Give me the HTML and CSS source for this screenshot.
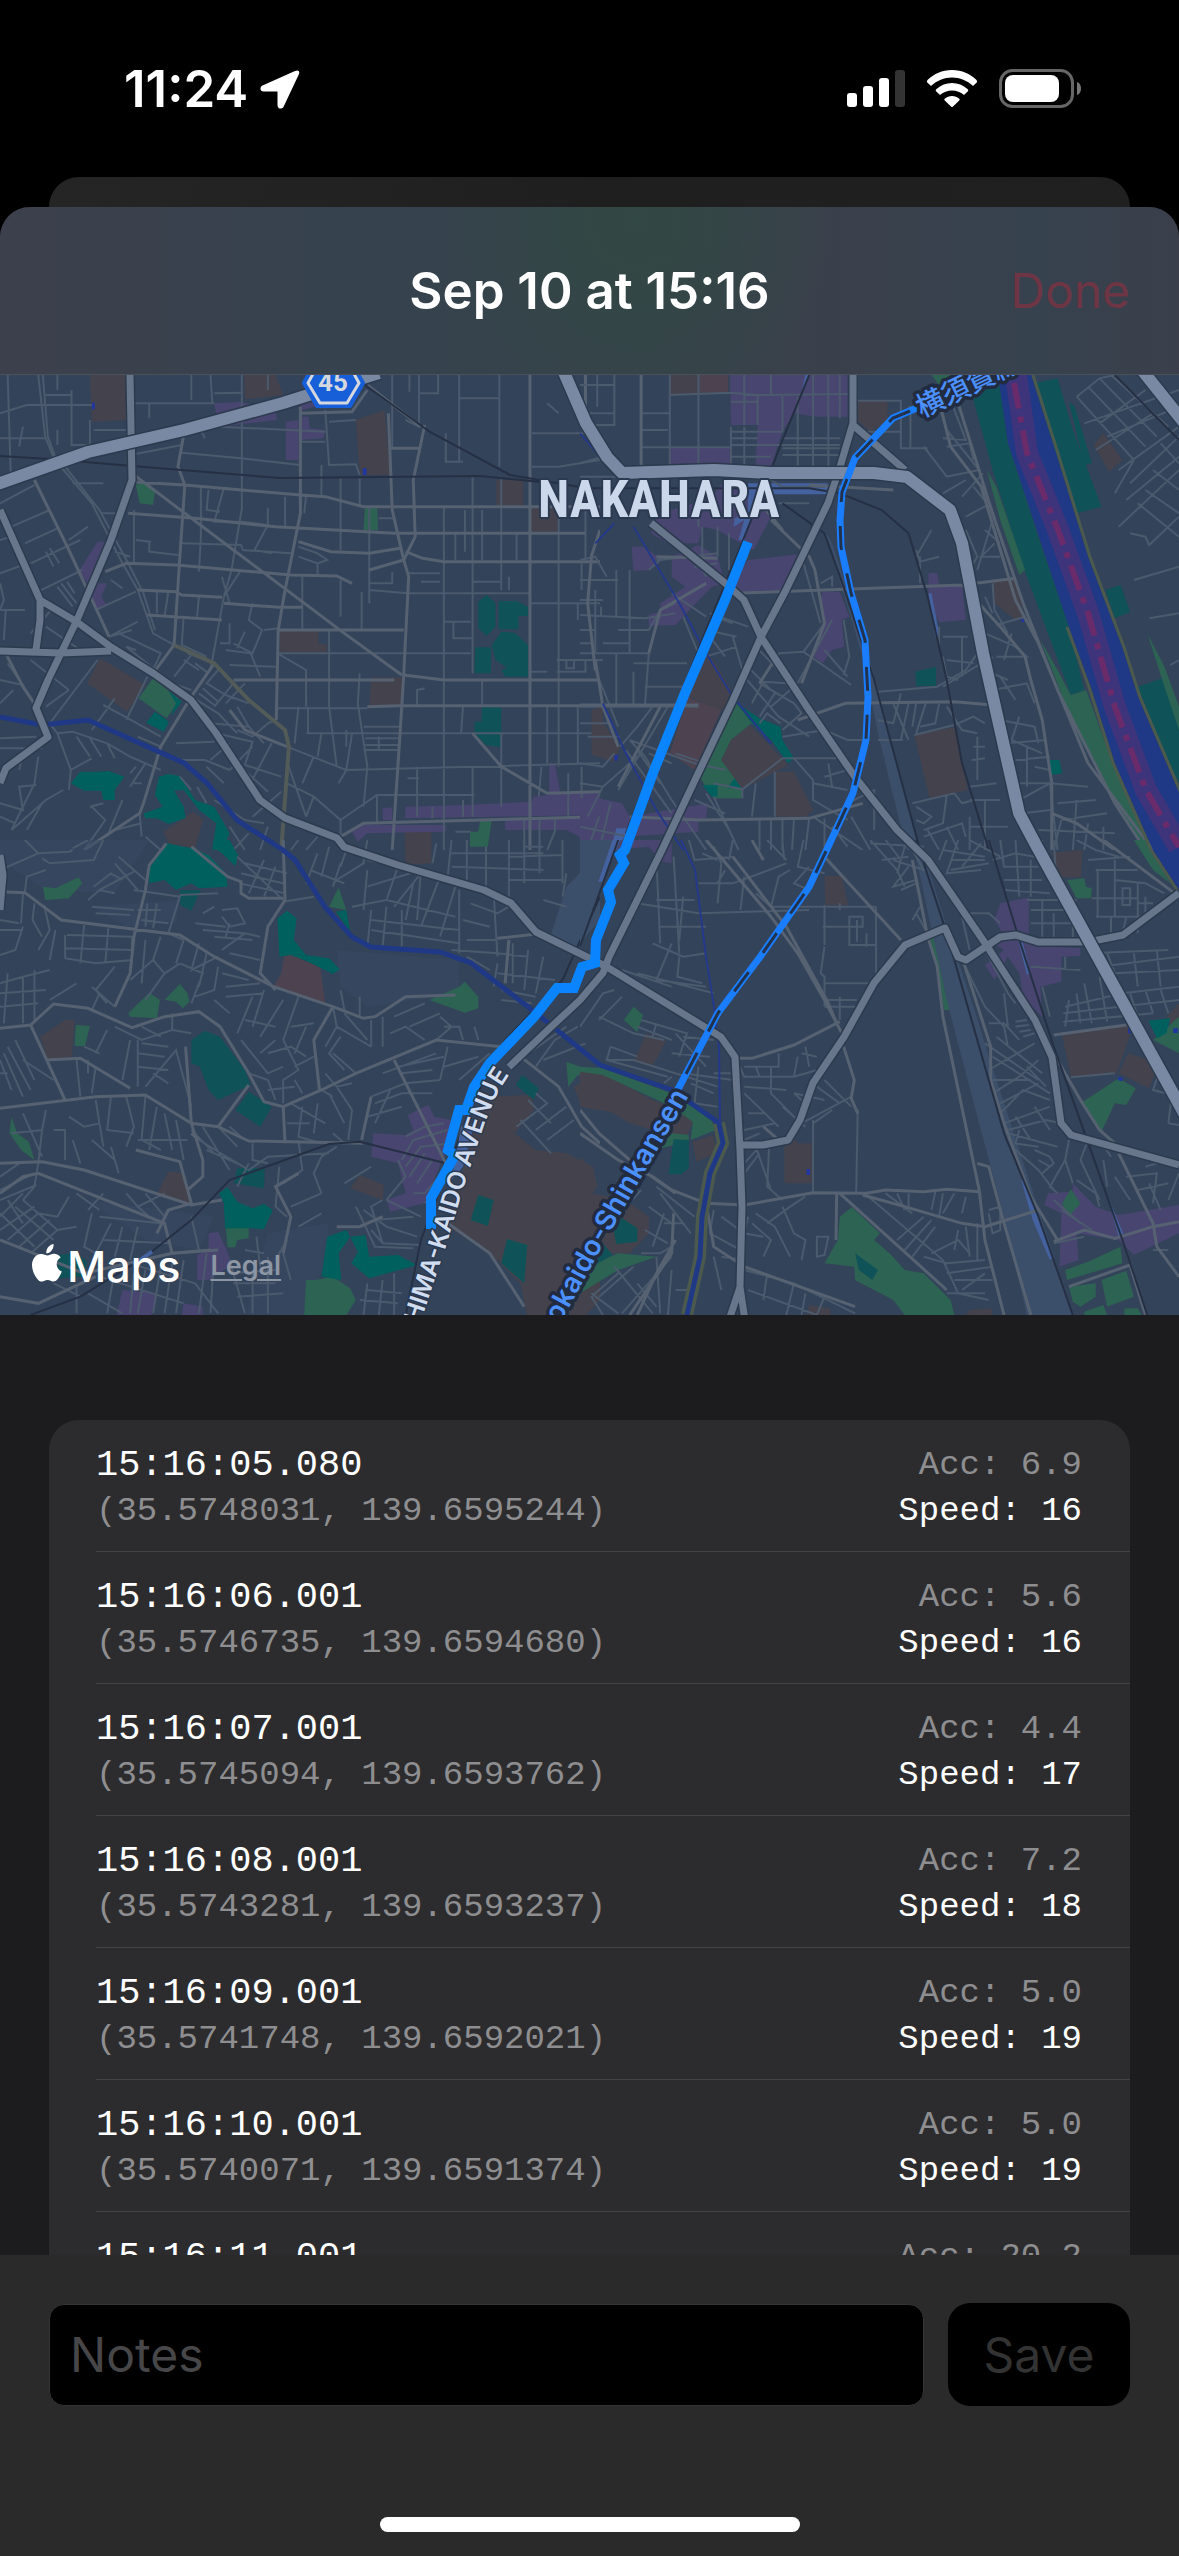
FILE: index.html
```html
<!DOCTYPE html>
<html lang="en">
<head>
<meta charset="utf-8">
<meta name="viewport" content="width=device-width, initial-scale=1">
<title>Sep 10 at 15:16</title>
<link rel="stylesheet" href="styles.css">
</head>
<body>
<header class="status">
  <div class="status-left">
    <time>11:24</time>
    <svg class="arrow" viewBox="0 0 40 40" aria-hidden="true"><path d="M35 2 2.500 16.500C-.5 18-.2 22.500 3.500 22.500H17.500V36C17.500 40.500 22.500 40.500 23.700 37.500L39 5C40 2 38 .6 35 2Z"/></svg>
  </div>
  <div class="status-right">
    <svg class="signal" viewBox="0 0 58 38" aria-hidden="true"><rect y="23" width="10" height="14" rx="3"/><rect x="16" y="16" width="10" height="21" rx="3"/><rect x="32" y="8" width="10" height="29" rx="3"/><rect class="off" x="48" width="10" height="37" rx="3"/></svg>
    <svg class="wifi" viewBox="0 0 50 38" aria-hidden="true"><path d="M25 0C35 0 43 4 49 9.500 50.500 11 50.300 12 49.500 12.800L46 16C40 10.500 33 7.500 25 7.500S10 10.500 4 16L.5 12.800C-.3 12-.5 11 1 9.500 7 4 15 0 25 0Z"/><path d="M25 13C31 13 36 15 40.500 19 41.500 20 41.500 20.800 40.700 21.500L37 25C33.500 22 29.500 20.500 25 20.500S16.500 22 13 25L9.300 21.500C8.500 20.800 8.500 20 9.500 19 14 15 19 13 25 13Z"/><path d="M25 26C28 26 30 27 32 28.500 33 29.300 32.700 30 32 30.700L26 36.500C25.300 37.200 24.700 37.200 24 36.500L18 30.700C17.300 30 17 29.300 18 28.500 20 27 22 26 25 26Z"/></svg>
    <svg class="battery" viewBox="0 0 82 40" aria-hidden="true"><rect class="shell" x="1.500" y="1.500" width="72" height="36" rx="12"/><rect x="6" y="6" width="54" height="27" rx="8"/><path class="cap" d="M78 13C81 14 82 17 82 19.500S81 25 78 26Z"/></svg>
  </div>
</header>
<div class="back-card"></div>
<main class="sheet">
  <header class="nav">
    <h1>Sep 10 at 15:16</h1>
    <button type="button" class="done">Done</button>
  </header>

  <section class="map-box" aria-label="Map of the recorded track">
    <svg class="map" viewBox="0 375 1179 940">
      <!-- north-west -->
      <svg x="0" y="370" width="600" height="480" viewBox="0 0 1568 1440" preserveAspectRatio="none">
        <path class="school" d="M235 15H330V150L240 155ZM638 15H720L740 75 640 88ZM930 150L1005 120 1020 315H940ZM1297 330H1367V405H1297ZM1388 415H1457V485H1388ZM732 782H832V820L855 825V848L732 845ZM970 922H1050V1010H966ZM262 865L380 945 332 1025 228 940ZM1548 1025L1568 1015V1155H1548ZM505 1325L530 1350 510 1435 440 1420 428 1385ZM1058 1385H1127V1440H1058Z"/>
        <path class="shop" d="M560 100L630 95 720 125 725 150 570 170ZM747 155L780 150V270H747ZM785 140H805L810 175 850 180 845 205 785 210ZM785 100L830 85 840 105 790 120ZM255 515H278L230 640 205 605ZM250 640H280L265 680 278 705 250 720 235 680ZM1000 1315L1025 1312V1350H1000ZM1060 1310L1215 1305 1390 1295 1395 1280 1435 1275V1180H1450L1465 1270H1568V1335L1058 1345ZM920 1385L950 1365H1165V1385L960 1390 935 1415ZM1320 1348L1568 1345V1430L1480 1380H1320Z"/>
        <path class="park" d="M355 345L375 338 405 365 400 405 365 400ZM953 415H986L988 480H950ZM400 925L470 990 435 1045 362 985ZM1255 1350H1285L1275 1430H1228V1385H1250Z"/>
        <path class="field" d="M1250 695L1272 675 1295 700V770L1272 798 1250 775ZM1303 693H1350L1380 710V738H1355V778H1303ZM1285 825L1310 785 1345 788 1380 825V920H1320L1310 900 1325 893 1295 870ZM1242 832H1283V910H1240ZM1260 1012H1310V1132L1270 1125 1240 1090V1055H1258Z"/>
        <path class="wood" d="M405 1025L442 1055 428 1085 382 1058ZM440 962L475 995 445 1040 460 1000ZM185 1240L210 1205H260L285 1203 325 1220 300 1260V1290H270L265 1262 220 1262ZM415 1220L440 1212 470 1218 510 1290 560 1310 600 1390 590 1420 610 1440H555L565 1360 520 1320 480 1260 455 1262 480 1310 485 1345 440 1362 410 1345H380L375 1330 425 1310 405 1275Z"/>
        <path class="water-spot" d="M240 98H248V118H240ZM948 295H958V315H948Z"/>
        <path class="lane" d="M20 15L28 310M100 15L118 200 140 262M112 15L125 200 145 262M235 150V225M0 205H118M0 130L70 105H240M340 100H560M245 180H335M550 15L555 100M560 70L635 68M632 15V415L605 600 585 680 550 900M340 255L475 225M475 248L630 265 785 285M500 15V90M150 15V60M120 75H185M187 60V225H235M520 165L535 205M390 100V145M150 180V225M570 170L850 185M850 120L860 285 930 283 940 315M785 215H850M860 155L930 150M1025 15V235M1095 15V170L1060 150M1098 70H1145V15M1200 15V275M1165 190V275H1210M1305 15V290M1200 85H1305M1390 190H1530V15M1390 290H1460L1568 270M1430 100L1460 130M1070 15V65M700 15V60M745 380V470M632 265V415M840 285V375M890 325V540M940 325V410M1030 445H990M965 410V600M965 480V545M1160 410V930M1235 320V910M1310 320V660M1460 340V930M1530 410V570M1190 490V570M1215 420V545M1260 420V570M1350 490V570M1065 610H1150M1150 635H1100M1235 635H1310M1330 620V660M965 660L1065 670H1385M780 530L830 550 855 570 830 580 780 560M830 580V620M790 620V780M890 630V740M965 560V700M945 665V780M965 600V640H1025V605M1385 700H1568M1520 580V660M1510 700V750M730 850H1230M1230 755H1160M1185 755V805H1235M1160 850V910M725 850L800 900V935M860 780V1010L880 1190M940 910L935 1000 960 1190 950 1310M800 920V1010M780 1010L770 1120M725 1015H960M1090 1010V960L1110 955M1210 1010L1205 1090M1260 930V1010M1460 870V1190M1455 870H1530V905H1455M1480 870V895H1500V870M1430 905H1385M800 1090H1568M950 1070H1045M950 1140H1045M955 1125H1045M955 1105H1045M990 1100V1140M1430 1010V1180M1510 1010V1180M1160 930V1440M1310 1090V1310M1235 1190V1340M1065 1225H1095M1090 1190V1340M890 1350L985 1275H1240M985 1275V1360M1415 1190L1408 1280M1485 1210V1340M1520 1190V1340M1410 1345V1440M1370 1345V1440M1450 1345V1385L1430 1440M1190 1385H1230M1210 1290V1340M1130 1310V1345M750 1130L905 1200 1568 1180M750 1240L820 1280 890 1350V1400M820 1160L790 1240M820 1280L800 1340M750 1175L800 1340M905 1200L885 1240M60 170L50 230M635 455L700 465 665 540M525 350V500L520 605M545 360L540 420 575 425M585 355L560 455 635 455M475 520L630 525 635 540 760 550M350 420V580M390 515V545L465 555M355 510L395 515M630 600L585 680M580 620L600 700M700 465V415M710 550L665 540M800 375L795 430M660 700L650 750 685 780 660 850 610 820M690 780L730 775M590 840L655 850 680 920M600 885L720 890M600 760V820H575M520 680L515 740M410 665V730M440 665L430 740M480 740L475 825 540 860M560 880L490 850M640 785L620 835M805 1010V1090M840 1090L830 1160M905 1130V1080M920 1090L905 1200"/>
        <path class="lane" d="M155 285L240 400 320 580 360 660 400 790 455 825M170 290L260 420 335 580 375 670 405 780M0 400L90 345M30 470L130 420M65 520L150 475M80 580L210 510M0 610L60 585M90 670L215 600M250 720L355 665M145 705L80 790M285 800L360 755M80 870L180 960M120 770L210 840M255 870L130 1060M385 920L330 1050M270 1005L350 1055 420 1100M300 985L240 1080M180 960L120 1010M0 930L60 945 20 880M35 960L0 1000M0 640L10 690 0 720M0 720H65M15 720L10 810M0 510L30 500M130 535L155 580M120 545L140 590M150 650L190 710M160 640L200 700M175 635L195 670M290 630L320 655M190 340H270M265 430H320M230 470L180 510M300 545L340 560M345 780L285 800M310 790L420 850 395 910M355 840L330 830 450 940 500 960M500 980L570 1030 620 1090M490 1000L560 1060M455 920L500 855M545 910L510 880M520 900L480 870M570 900L540 940 590 975 650 1000M610 940L560 1010M640 940L590 1000M520 970L560 1005M530 955L570 995M620 1080L660 1100 700 1060 720 1050M565 1090L660 1115 640 1185M460 1120L560 1115M620 1010L650 1070 690 1120M650 1070L550 1060M660 1130L600 1200M600 1120L550 1170M710 1120L650 1250M640 1185L735 1220M610 1170L700 1265M585 1240L540 1190M735 1265L660 1340M420 1130L360 1100M450 1170H535L600 1200M0 1135H110M0 1105L95 1100M60 1155L50 1200M130 1060L150 1090 185 1200 180 1260M150 1090L190 1085 280 1120 340 1160 420 1200M185 1200L240 1165M200 1100L235 1160M235 1105L265 1160M280 1120L300 1165M380 1180L340 1250M355 1190L340 1210M350 1240H370M100 1160L90 1240 30 1380M0 1300L60 1320 50 1250 95 1245M165 1260L120 1290 30 1380M70 1380L110 1300M0 1340L40 1360M240 1310L275 1350 220 1440M320 1290L280 1400M370 1360L300 1380M235 1310L270 1300M365 1330L370 1400M380 1400L420 1440M600 1370L640 1440M650 1390L610 1440M700 1370L680 1440M780 1410L760 1440M830 1400L800 1440M515 1250L540 1300M560 1290L640 1350 690 1360M500 1260L470 1220"/>
        <path class="street" d="M480 195L465 290 483 345 470 560 455 825 400 910M340 335L483 345 785 375 850 380 950 410H1568M785 110V430L745 660 727 780 722 1050M335 430L510 445 720 470 1030 490H1530M345 310L610 540 900 790 1050 915M275 605L330 580 460 585 760 615 880 618 920 640M360 660L460 665 475 675 580 682M385 735L580 750M585 700L730 712 790 712M1110 165L1080 330 1085 500 1055 570 1068 620 1055 915 1045 1100 1025 1440M1015 130L1025 420 1055 570 965 600M780 515L865 545 965 550 1045 535M1060 545L1105 565 1160 575H1568M1385 15V1440M730 780H1055M610 930H720 1030M1055 915L1160 930H1568M960 1010 1040 1007H1568M1235 1090L1310 1190 1430 1270 1568 1265M890 1400L950 1360 1568 1340M90 330L180 540 285 800M560 880L500 980 420 1130 375 1300 365 1330 220 1440M750 1130L640 1080 600 1020M15 850L60 950 95 1010M1530 190V15M1545 560L1568 480M785 130L920 125 960 60M1100 170L960 45M1020 235H1095"/>
        <path class="trail" d="M455 825L560 880 650 990 745 1080 755 1130 735 1440"/>
      </svg>
      <!-- north-east -->
      <svg x="580" y="370" width="599" height="480" viewBox="0 0 1568 1440" preserveAspectRatio="none">
        <path class="field" d="M1010 15H1095L1120 220 1200 500 1280 770 1320 960 1285 975 1160 590 1080 300 1030 90ZM1190 40L1250 25 1290 180 1365 410 1300 430 1240 230ZM1460 950L1525 925 1568 1050V1240L1530 1150ZM1375 660L1415 645 1440 725 1400 745ZM1280 95L1295 110 1340 280 1320 285ZM878 905L932 890V948H880Z"/>
        <path class="park" d="M920 15H970L950 60ZM1205 810L1250 900 1285 975 1325 960 1400 1200 1500 1440H1480L1400 1290 1310 1110 1280 1030ZM1065 300L1090 350 1165 600 1150 615 1100 450ZM1485 790L1530 890 1568 1010V1080L1530 950ZM410 1000L450 1060 395 1110 370 1170 425 1255V1285H350L315 1225 350 1130Z"/>
        <path class="wood" d="M410 1000L470 1045 525 1070 530 1110 560 1165 545 1180 500 1110 450 1060ZM320 1245H360V1280H345ZM385 1255L405 1225 425 1255ZM1228 1170H1255L1262 1210 1232 1215Z"/>
        <path class="school" d="M237 15H310V70L237 75ZM725 92H805V155L760 185 725 150ZM325 860L350 870 410 990 370 1020 285 980ZM1080 628H1140L1165 750 1140 750 1085 700ZM445 1065L545 1185 425 1258 370 1170 395 1110ZM512 1205H560L610 1320 590 1340H512ZM875 1095L985 1070 1015 1260 915 1285ZM30 1020L60 1010V1060L105 1130 90 1175 30 1155ZM1345 225L1370 190 1420 270 1385 305Z"/>
        <path class="hospital" d="M313 15H388V68H313ZM283 982L370 1020 300 1200 235 1150Z"/>
        <path class="shop" d="M393 15H700V140H615L560 130 530 185 500 290 460 285 465 165H395ZM235 232H395V288H235ZM385 320L500 440 455 540 390 500 360 480 320 470 310 520 230 520 185 490 205 430 300 400 345 380ZM440 570L570 553 540 660 415 665 395 640ZM135 530H165L205 560 185 600 140 603ZM240 560L310 525 360 560 380 640 345 650 250 765 180 768V735L210 725V700L275 650 240 620ZM635 665L680 665 705 740 685 750 692 830 660 840 635 880 612 860 640 760 630 690ZM912 610L935 608 940 645 1000 645 1010 750 940 757 912 700ZM0 1285L30 1280 110 1300 130 1340 335 1300 330 1345 310 1350V1385L120 1400 70 1440H0Z"/>
        <path class="station" d="M440 340H648V373H470L430 510H415L430 450 402 470 405 445 440 430ZM912 670H920L942 800H930ZM95 1375H125L100 1440H80ZM590 15H600L575 90Z"/>
        <path class="rail-yard" d="M640 480L660 520 740 800 790 1000 890 1440H855L780 1090 740 860Z"/>
        <path class="water-spot" d="M1150 745L1165 750 1160 758ZM90 1155H100L97 1172H90Z"/>
        <path class="lane" d="M0 45H90V165H0M45 15V110M90 45V15M90 130H0M160 130H235M235 15V290M310 15V285M235 75L390 68 465 75 700 72M160 232H395M160 180H230M395 170V290M430 170V290M465 75V165M500 15V72M430 15V165M395 95H465M530 75V185M570 80V290M610 15V290M650 15V290M680 15V145M395 185H530M395 205H465M395 225H680M395 260H500M530 205H680M530 255H680M530 235H680M0 320H100M0 280L60 260M520 400H600M500 330L530 350H640M725 92H840V235H910M865 110V235M840 185H720M900 230L960 320 1045 300M895 120L860 110M930 70L960 180 1045 300M975 105L1010 210 950 205M960 230L1020 220 1030 270M1010 330L950 370M1055 310L1000 380M1075 400L1010 440M1030 350L1080 420M1040 600L1080 450M1060 480L1100 520M1010 480L1040 560 1020 600M940 560L890 575 880 540M890 560V640M920 480L880 560M1085 520L1050 560H1100M1080 640L1085 720 1120 790M1090 765L1165 740M1060 680L1080 730M1060 790L1140 830 1170 860H1090M1130 790L1110 870M940 770V830M950 800H1015M950 860L960 920 990 930M960 870L1030 880M1000 800V920M1050 880L950 950M1080 860L1060 900 1120 930M1080 960L1170 940 1190 1000M1100 920L1140 990M1100 1050L1190 1070 1200 1120M1150 1040L1130 1110 1210 1150M1110 1120L1220 1110M1140 1170L1230 1160M1170 1130V1250M1130 1240H1230M1190 1190L1230 1200M1150 1290L1230 1240M1160 1330L1230 1320M1230 1240L1330 1250M1250 1300L1350 1290M1260 1350L1380 1330M1200 1380L1400 1390M1260 1350L1240 1440M1300 1290L1290 1440M1330 1360L1320 1440M1370 1370V1440M1230 1240L1250 1440M1020 1290H1100M1020 1250L1090 1240M1020 1370H1120M1060 1290V1440M1020 1340V1440M1030 1130H1060M1025 1170L1060 1165M1040 1100V1230M780 965L935 950 1010 900 1040 850M840 970L820 1060 780 1050M860 1000L840 1110M880 1000L870 1070M905 1000L880 1090M940 1000L930 1060 890 1070M960 1010L1000 1080 1040 1090M820 1000L860 1110M780 1110H845M875 1095L980 1065 1030 1040 1060 1060M870 1300L980 1270 1000 1300M880 1310L920 1340 900 1360 880 1350M960 1275L950 1360 900 1380M900 1400L1000 1360 1010 1400M910 1380L940 1440M960 1370L990 1440M1000 1300L1030 1290M380 1200L300 1180 130 1110M530 1100L640 1080 700 1110H740M590 1165L530 1165 425 1258 350 1240M590 1165H690M560 1165L610 1230V1290L700 1350M640 1220L700 1200M650 1180L660 1250M610 1240L700 1260M425 1258V1285M510 1205V1340M460 1240L450 1340M610 1340L740 1440M640 1345V1440M660 1370L700 1430M600 1345L590 1440M560 1350L555 1440M530 1350V1440M470 1345V1440M500 1345V1440M700 1300L770 1260V1380M710 1340L760 1440M530 1080L580 1030 560 1000 470 940M525 1060L490 1030 470 1060M470 1040L510 970M570 940L500 1010M480 935L540 940M400 800L430 920 520 1040 600 1100M430 880L500 960M410 830L330 860M330 780L410 800M350 740L400 760M340 800L380 860M340 730L440 770M305 560L330 620M300 590L360 580M0 735L170 745 250 730M0 850H180M0 630H100M0 690H60M40 660V850M55 710V740M95 600V740M130 600V850M0 780H40M0 820H30M0 870H60M40 900L100 1070M95 850V1010M140 880H280M180 850L170 1010M140 905V1010M170 950H280M0 1010H310M180 780L210 720 250 700M270 740L310 850M240 670L330 740M60 820H130M100 780H180M0 1060H80M190 1010L150 1070M230 1010L100 1260M20 1100H105M105 1130L150 1070M0 1180L60 1190 90 1150M130 1110L170 1160 240 1290 330 1440M120 1140L240 1330M150 1140L210 1240M180 1150L240 1180M250 1150L330 1180M0 1240L60 1250 150 1160M350 1280L415 1440M330 1270L390 1380M300 1290L380 1330M60 1250L20 1340M0 1370L130 1400M50 1340L20 1440M80 1300L50 1440M70 620L40 560 0 570M180 600L210 570 360 550M200 570L240 560M320 470V560M310 400V470M360 470V560M390 490V600M410 560H440M520 850L585 845 710 945M585 845L640 760M640 840L700 920M690 750L705 860 690 915M580 560L630 760M460 830L520 900M570 940L660 750M630 640L660 620V650M480 935L450 1000M1300 80L1360 25 1400 15M1300 80L1450 270M1320 160L1568 60M1330 50L1480 230M1360 25L1510 200M1390 15L1540 170M1360 160L1420 110 1480 60M1350 240L1500 130M1380 200L1568 110M1410 300L1568 170M1450 270L1400 370M1440 340L1568 200M1430 390L1568 260M1410 470L1568 300M1460 400L1568 500M1480 360L1568 430M1500 300L1568 360M1520 220L1568 280M1440 490L1480 500 1490 525 1568 440M1450 630L1568 590M1490 745L1568 730M1545 885L1568 870"/>
        <path class="street" d="M160 15V310M500 450L600 560 615 600 640 760 580 940M480 410L530 480M400 670L1000 645 1140 625M935 70L970 230 1050 350 1140 690 1200 820 1330 1180 1500 1440M990 100L1080 430 1160 700 1250 960 1400 1300 1480 1440M1000 645L1100 770 1165 860 1180 930 1210 1050 1235 1240V1440M0 1005H160L310 1005M570 1050L695 1000 980 995 1080 1005M210 1010L100 1250M180 850L210 720 330 640M40 870L60 1010 100 1130M310 1350L600 1345 740 1300M130 1340L310 1350M1235 1330L1300 1360 1400 1440M200 560L360 565M520 850L470 940M30 560L20 700 40 900M600 345L820 360"/>
        <path class="brook" d="M0 190L60 270M140 470L260 700 330 850 400 980 500 1120M90 460L40 520M60 1000L120 1150 200 1320 270 1440"/>
        <path class="rail" d="M600 15L530 210 490 330 420 530 330 780 120 1390M0 355H600L680 370 790 420 860 490 910 680 960 930 1000 1180 1070 1440M530 400L640 490 690 650 770 930 890 1440M1400 15L1568 210"/>
      </svg>
      <!-- south-west -->
      <svg x="0" y="840" width="600" height="480" viewBox="0 0 1568 1440" preserveAspectRatio="none">
        <path class="relief" d="M0 0H390L300 160 120 150 0 60ZM240 200L470 180 460 250 330 260ZM880 330L1200 360 1200 460 960 500 890 440ZM230 1080L560 1130 520 1230 380 1200ZM700 1180L860 1150 850 1260 800 1440H640Z"/>
        <path class="school" d="M440 0H510L500 20ZM1058 0H1127V70L1060 75ZM105 590L170 540H195L188 650 125 660ZM440 995L480 1000 497 1090 412 1060ZM940 1005L1003 1035 1000 1080 915 1045ZM1500 740L1568 700V810L1520 800ZM1260 770L1390 765 1395 810 1345 880 1400 930 1480 940 1550 980 1560 1040 1530 1090 1568 1110V1380L1520 1440H1380L1360 1330 1280 1240 1170 1160 1190 1060 1220 950Z"/>
        <path class="hospital" d="M745 335L800 365 835 365 850 490 715 440 735 400Z"/>
        <path class="shop" d="M1065 825L1120 795 1135 830 1180 840 1185 900 1155 960 1110 1090 1020 1115 1010 1080 1060 1060 1040 970 970 950 975 880 1060 885 1080 870ZM515 1245L545 1230V1180L570 1175 600 1250V1280L545 1320H515ZM320 1350L410 1360 395 1425H305ZM480 1390L530 1400V1425H475Z"/>
        <path class="park" d="M112 140L145 145 205 112 215 130 180 175 118 180ZM1228 0H1275V18H1228ZM885 142L905 210 860 200ZM335 520L390 458 418 480 410 535 340 530ZM430 480L470 432 490 460 495 485 478 505 460 485ZM198 555L235 558 222 618H195ZM1122 480L1200 440 1215 425 1250 470 1250 505 1215 518ZM30 830L45 880 75 905 90 960 55 930 25 880ZM590 1165L650 1162V1195L620 1200 615 1222 595 1222ZM800 1320L825 1320 870 1310 915 1345 930 1380 905 1425H795ZM1480 665L1540 690 1568 680V700L1510 705 1485 740Z"/>
        <path class="field" d="M500 600L535 572 575 590 640 690 655 735 570 780 545 750 522 680 500 670ZM650 755L710 800 680 860 615 810ZM1365 705L1408 745 1395 780 1348 735ZM1250 1065L1290 1080 1275 1158 1230 1140ZM1325 1197L1378 1215 1370 1330 1310 1270ZM620 985L692 985 690 1045 612 1030ZM470 150L525 150 500 212 470 195Z"/>
        <path class="wood" d="M435 10L500 25 545 45 590 100 595 140 520 145 500 130 460 150 430 120 390 130V85ZM558 0H600L622 45 615 78 580 40 555 20ZM725 235L750 212 775 235 768 300 800 345 860 355 888 388 870 402 800 362 760 345 730 350ZM878 215L905 210 915 275ZM572 1060L595 1042 620 1085 660 1105 690 1092 713 1110 690 1168 655 1165H588L585 1090ZM855 1190L905 1170 915 1190 885 1240 892 1320 840 1310ZM915 1190L955 1185 965 1250 1040 1245 1090 1275 965 1315 918 1270 935 1235Z"/>
        <path class="field" d="M150 1245L200 1238 228 1265 220 1310 150 1315Z"/>
        <path class="rail-yard" d="M1545 65L1568 60V240L1500 330 1438 290 1480 140Z"/>
        <path class="lane" d="M0 90L100 40 180 35 190 30M100 40L65 0M270 0L245 60 130 70 110 55M190 25L230 0M65 155L70 110 120 90M310 50L380 120M300 70L360 150M260 150L350 95M245 140L290 100 320 120M0 270H60M90 190L85 240 110 290M60 160L55 250M0 240L50 250M115 195L130 270 100 330M145 270L130 360M60 260L40 330 0 345M170 285V355M220 255L210 370M283 265L275 370M175 285L350 290M170 325L345 330M170 355L250 370 345 360V290M240 200L350 210M250 220L340 225M230 180L260 150 300 160M350 150L470 170 440 280M360 210H420M370 240L440 250M385 190L380 260M410 190L400 265M440 280L480 300M470 165L570 160M580 210L620 205 640 250 600 260 580 230M510 250L590 260M530 220L560 200M530 270L640 280M560 290L660 300M600 250L590 290M580 330L640 280 680 290M600 340L680 360M480 300L460 370M520 310L500 390 570 350M380 300L370 430M420 290L400 360 340 420M400 360L430 400 470 370M430 400L380 480M470 370L530 400 500 490M540 340L520 440M570 380L560 450 510 470M580 400L650 420M590 440L680 430M590 470L690 460M560 480L600 520M300 380L250 450 280 490M240 440L300 500M260 460L240 510M200 430L130 480M0 430L60 410 130 390M60 410V550M0 460L120 450M0 500L100 490M20 400L10 550M90 390V540M620 50L740 180M640 70L750 100M630 100L740 130M625 130L745 160M690 60L650 160M720 80L690 170M830 40L800 130M810 90L900 130M860 20L840 110M820 170L740 185M890 70L870 140M880 120L950 70 960 0M905 30L890 80M960 60L1040 80M960 140L1100 90M920 200L1010 180 1040 80M960 90L950 210M1010 180L1190 230M1030 200L1100 100M1060 240L1080 130M1100 260L1150 110M1150 290L1190 140M1100 90L1090 240M970 240L1200 270M970 270L1200 310M970 210L960 320M1010 200L1000 320M1050 210V320M1200 150V340M1230 190L1300 220 1330 200M1210 240L1280 260M1220 300H1300M1290 160L1300 350M1180 330L1300 340 1380 350M1220 350L1280 390M1300 370L1290 440M1340 310V430M1380 330L1370 450M1420 350L1400 460M1300 400L1450 420M1310 450L1400 470M1310 480L1390 490M1140 10L1130 70M1180 0L1170 110M1220 0V130M1270 20V150M1330 0V180M1370 0V130M1410 0V100M1470 0V130M1180 40H1420M1180 80L1420 90M1330 120H1470M1330 50L1470 45M1370 20H1420M1480 100L1470 170M1420 180L1480 200M890 450L900 510M870 500L880 560 970 620M940 470V530M880 560L850 620M900 520L960 600M970 540V620M820 550L760 560M780 470L740 600M740 480L680 590M690 450L660 560M660 470L620 580M720 600L680 640M640 540L720 560M630 600L700 700 740 680M700 640L760 620 800 650M740 600L780 690 740 720V790M770 720L790 760M700 750L770 740M800 560L770 640M650 700L700 720 720 780M820 650L770 680M870 640L930 700M890 590L860 640 900 690M850 700L880 740 920 730M840 750L870 770M760 790L850 850M790 800L780 890 840 910M830 790L820 880M860 760L900 850M880 740L920 810 910 900M750 850H810M870 880L900 910M970 770L1060 730 1150 720M980 790L1050 760 1130 760M1020 750L980 850M960 830L1050 800M1000 700L1140 640M1040 680L1160 650M1050 700L1130 690M1170 620L1150 720M1140 600L1180 560 1150 530M1110 600L1060 560 1020 580M1030 530L1110 490M1070 560L1150 520M1000 530V620M1210 600L1200 560 1160 560M1250 600L1240 560M1340 600L1400 540M1200 720L1280 640M1160 680L1250 650M1400 680L1450 600 1510 560M1420 660L1530 610M1380 640L1480 560M1400 760L1430 790 1350 860M1380 780L1440 850M1360 840L1440 940M1480 800L1400 870M1500 840L1430 900M1060 890L1110 860 1160 850M1080 900L1170 870M1050 960L1080 900M1060 980L1100 920 1180 910M1070 1010L1110 940M1090 1030L1130 960M1080 1060L1110 1060 1140 1020M1110 1090L1140 1060M1040 960L1060 1010 1010 1080M1000 1080L970 1100 1000 1210M950 1110L1010 1160 1090 1190M980 1140L1080 1130M970 1170L1000 1210 1100 1215M1010 1080L1100 1130M930 1100L980 1220 1080 1225M900 1030L970 980M840 950L820 1000 840 1060M880 920L840 950M780 900L790 990 740 1030M650 970L620 1040M500 870L560 940M530 860L600 990M570 860L620 920M540 930L620 970M600 860L640 900M660 910V960L700 970M730 980L720 1100 750 1130M840 1060L760 1100M840 1120L780 1160M520 900L650 990 700 950 860 940M0 660L30 750M10 640L60 770M20 620L80 750M40 600L90 720M0 700H20M60 660L140 720M200 660L210 770M230 660V700M250 680L240 760M260 640L220 620M280 570L250 640M300 560L370 600 450 570M360 600V740M370 610L440 620M360 640L430 650M360 680L440 690M380 740L460 630 500 800M400 700L440 730M340 600L320 720M370 560L420 590M450 520V570L500 580M60 820L110 950M30 880L110 870 120 810M110 870L100 970M140 870H170V960M180 830L220 860 260 850 270 920M250 780L260 850M290 770L280 870 350 880M240 900L300 960M190 900L210 970M330 770L350 860 330 920M380 770L370 900 420 930M410 800L390 930M430 820L450 930M360 900H490M460 840L480 960M290 920L310 1000M0 1010L50 970M0 1050L90 1000M0 1080L95 1035M0 1130L60 1060M0 1170L90 1100M20 1200L100 1120 150 1130M50 1220L130 1140M40 1100L140 1200M60 1080L150 1170M0 1120L90 1220M20 1080L60 1150M80 1240L150 1170 200 1160M240 1120L220 1220 250 1240M260 1130L420 1150M290 1150L250 1240M320 1160L300 1250M360 1160L340 1260M270 1200L440 1210M200 1060L260 1110M180 1070L150 1130M270 1060L230 1110M330 1060L360 1100 430 1060M360 1100L400 1140M380 1060L430 1130M100 970L90 1040 60 1080M540 1240L520 1420M500 1130L520 1230M560 1240L550 1420M300 1290L280 1420M340 1270L510 1330M350 1300L340 1420M380 1290L360 1420M420 1280L400 1420M450 1270L430 1420M480 1260L460 1420M510 1330L570 1420M260 1310L480 1390M230 1360L320 1420M200 1340V1420M140 1330L210 1370M600 1260L640 1420M640 1230L690 1240M670 1190L680 1280M600 1300L720 1290M610 1330H720M620 1370L740 1360M660 1290V1420M700 1250V1420M740 1240L760 1320M750 1200L720 1260M960 1350L1050 1360M940 1380L1040 1390M960 1330L950 1425M1000 1320L990 1425M1030 1300V1425"/>
        <path class="street" d="M435 10L390 75 380 150 350 290 340 400 300 500M500 20L595 110 630 125V160L650 175H740M0 155L65 158 160 240 470 285 560 350 715 440 870 500 950 535 980 530 1060 470 1190 465M740 0L745 180 700 260 680 400 720 450M0 565L80 555 140 492 230 505 345 563 430 530 520 515 575 560 650 700 690 785 740 800 840 750 930 700 1140 600 1310 620M80 555L170 780M120 660L210 655 340 745M0 805L250 770 380 765 500 850 570 860 650 903 950 910M870 500L820 600 835 750M970 770L945 900M1030 660L1165 970M650 735L570 860M485 620L500 850 530 960V1010L490 1050M355 930L470 965 500 1090 440 1110 410 1180M0 970L110 965 220 990 500 1095 580 1080M740 800L745 910M0 1060L60 1010 100 1000 430 1150 450 1240 550 1230M0 1200L220 1300 450 1240 570 1230M0 1370L100 1390 250 1310M520 900L500 880M780 1000L720 1040 760 1130 740 1240M1000 1130L940 1160 880 1160M1360 650L1460 740 1520 860 1568 910M1320 430L1330 300M1170 1150L1280 1240 1370 1400M870 0L940 30M1300 295L1420 280"/>
        <path class="rail" d="M1568 170L1470 420 1320 600 1230 800 1180 960 1100 1200 1060 1425M1160 968L940 905 860 912 600 1020 500 1140 380 1250 210 1370 80 1425"/>
        <path class="station" d="M1205 860L1240 850 1210 980 1180 1020ZM345 1270L395 1230 400 1240 350 1280Z"/>
      </svg>
      <!-- south-east -->
      <svg x="580" y="840" width="599" height="480" viewBox="0 0 1568 1440" preserveAspectRatio="none">
        <path class="school" d="M0 690L60 700 190 780 240 800 295 845 280 890 220 880 130 850 80 815 0 800ZM173 580L225 600 205 650 185 680 142 665ZM295 905L350 885 355 940 305 965ZM0 950L35 990 30 1060 120 1080 180 1130V1180L130 1240 80 1240 0 1330ZM560 895L570 910H607V1030H535V920ZM640 108H685L702 195H642ZM1235 38L1315 30 1312 112H1250ZM1262 585L1450 550 1405 700 1285 712ZM1435 640L1515 670 1490 745 1410 700ZM600 1395L655 1405V1425H593ZM1020 1410L1078 1405V1425H1010ZM1568 490V600L1535 530Z"/>
        <path class="shop" d="M50 15L110 0H240V70L215 65 180 20 80 30ZM1100 190L1175 172V280L1200 318 1310 325V348L1260 350V425L1205 440 1210 530 1160 470 1150 400 1120 350 1085 420 1060 375 1110 330 1080 310 1110 285 1085 240ZM1215 1095L1225 1060 1290 1055V1030L1350 1100 1410 1125 1568 1095V1180L1450 1245 1410 1200 1300 1180 1305 1260 1255 1280 1260 1120Z"/>
        <path class="park" d="M0 680L60 685 240 760 340 830 355 870 290 900 295 845 240 800 60 705 0 695ZM115 540L140 500 165 525 150 577ZM240 880L285 885V905L210 925ZM0 1290L100 1240 200 1250 100 1290 0 1360ZM915 290L935 290 950 400 970 510H953L938 400ZM1275 120L1320 115 1325 140 1340 145 1338 175H1300ZM1310 790L1410 715 1455 745 1430 795 1400 790 1365 875 1335 820ZM1500 600L1568 530V640ZM680 1130L712 1102 785 1180 770 1200 815 1245 850 1290 900 1300 970 1380 980 1425H850L820 1380 720 1320 718 1280 640 1270 675 1200ZM1262 1090L1285 1048 1310 1090 1280 1130ZM1270 1290L1330 1265 1415 1220 1420 1270 1275 1320ZM1280 1340L1350 1330V1370L1310 1400 1290 1385ZM1365 1320L1430 1292 1450 1370 1380 1400ZM1320 1415L1370 1395 1380 1425H1320ZM1425 1405H1460L1470 1425H1425ZM1450 0H1480L1545 130 1500 90Z"/>
        <path class="field" d="M245 898L285 900V985L265 1003 232 1003ZM85 1155L110 1135 150 1165V1205L95 1212ZM0 1250L60 1210 85 1245 0 1300ZM720 1240L780 1290 765 1320 730 1290Z"/>
        <path class="wood" d="M1488 542L1545 535 1535 580 1510 595Z"/>
        <path class="rail-yard" d="M870 0L900 40 960 260 1030 500 1065 630 1290 1425H1170L1110 1130 1010 700 960 480ZM0 0H90L40 200 0 330Z"/>
        <path class="station" d="M1155 1020L1165 1020 1240 1250 1230 1260 1185 1140ZM1378 1060L1422 1180 1410 1190ZM1145 290H1155L1180 400 1170 405ZM85 0H105L60 125H48Z"/>
        <path class="river" d="M1490 0H1568V110Z"/>
        <path class="water-spot" d="M593 987H602V1005H593ZM1435 562H1445V580H1435ZM1410 710L1422 714 1418 724 1408 720ZM1553 565H1565V579H1553Z"/>
        <path class="lane" d="M150 190L310 220 600 210M200 60L210 310M245 50L260 340M190 310L270 350 330 340M205 260H330M200 180H300M270 170L260 300M285 0L300 60 400 50M310 130H400L460 105 540 70M370 70L360 190M400 0L390 60M430 110L420 210M350 20L370 70M320 40L360 60M490 0L540 60M530 10L535 60M380 90L360 130M460 160L500 200 580 200M585 0L570 80 640 100M600 80L560 130 600 150M500 200L520 110 550 90M540 200H775M640 195V315M680 190V210M635 260H740V230H705V315H775M725 240V305M750 280V320M775 200V430M640 320L630 400 640 410V470M640 430H760M645 480H725M640 500H720M680 470V540M640 480V500M240 310L200 420 330 440M260 350L255 410 320 430M150 400L350 460M110 390L240 440M0 560L60 460 90 450M50 540L110 470M50 530L140 580 220 600M80 620L150 650M70 660L140 660 360 740M80 620L70 660 230 710M150 560L240 600M160 540L280 580 260 650M200 550L190 590M270 590L350 600M240 640L340 650M250 580L330 680M270 700L400 720M290 730L350 760M300 790L360 800M350 700H400M310 680L300 790M220 730L240 710M410 660L430 710H560L650 680M430 680H520V640M460 680L470 710M560 710L570 650M500 680V760L560 830M560 760L640 780M430 740L540 750M430 760L520 860M440 820H480M430 870L510 850M590 620L600 680M580 640L620 650M620 740L680 790M640 720L710 800M600 800L560 760M580 850L710 770M610 850L660 810M530 800L590 860M430 900L470 880M460 920L500 1050M430 970L470 920M495 920L490 1040 530 1080M430 1000L470 940M610 840V1055M727 810L723 1055M490 1150L550 1100 590 1070M460 1120L510 1160 550 1250M450 1150L500 1200 480 1250M530 1100L560 1180 590 1200 580 1260M620 1190H650L640 1245 620 1250ZM430 1260L370 1250M430 1180L370 1130M350 1110L340 1180 420 1230M440 1130L430 1180 480 1190M350 1250L370 1350M430 1290L560 1330 720 1420M440 1350L620 1425M560 1330L540 1425M640 1370L620 1425M590 1360L580 1425M490 1300L480 1380M300 1130L200 1040M290 1180L210 1060M220 1150H270M180 1100L240 1150M170 1170L230 1210M120 1100L160 1050M160 1240H210L240 1220M220 1120L190 1220M240 1250L110 1420M90 1280L190 1420M30 1360L100 1420M100 1300L30 1370 60 1425M140 1280L50 1370M200 1250L210 1420M240 1290L230 1425M300 1350H250M150 1330L200 1400M750 1065L950 1260 990 1360 1070 1380M800 1060L870 1120M830 1060L850 1110M860 1060V1100M930 1055L920 1110M950 1060L940 1130M980 1060L950 1120M1010 1070L1000 1120M830 1200L900 1130M850 1230L920 1140M870 1250L930 1160M900 1250L960 1270 1060 1260M920 1240L990 1200 1020 1240M990 1170L980 1230M1010 1160L1020 1250M1070 1110L1100 1100V1170L1080 1180 1070 1120M1040 1150V1260M960 1300L1080 1280M980 1320H1080M1000 1350L1060 1300M960 1360H1060M760 0L830 90 850 140M760 10L900 20M800 0L840 60M850 20L830 100M870 30L900 90 820 60M860 80L820 140 880 120M790 60L860 50M840 150L880 130M890 200L870 240M880 220L910 280M960 0L940 60M990 0L960 100 1050 90M1050 10L1000 80M970 60H1060M970 90L1070 70M950 30L1060 50M1020 0L1100 50M1100 0L1110 80H1200M1080 60L1140 40 1190 50M1110 120H1210M1140 0L1150 170M1110 150L1230 160M1180 60V170M1210 0L1190 50M1240 0L1250 170M1300 0L1350 30 1410 50M1330 60L1440 50M1350 90H1460M1355 90V230M1340 175H1460V280M1400 120V230M1400 60V120L1480 130 1530 160M1420 145H1440V195H1420ZM1460 130V190H1500M1480 170V230M1350 230H1500M1390 230V290M1430 230L1420 280M1330 340L1540 330M1360 380L1568 350M1380 340L1400 400M1450 340L1460 440M1510 330L1520 440M1400 400L1568 390M1420 460L1568 440M1270 500L1420 460M1280 480L1270 560M1265 520L1568 480M1265 545L1500 520M1320 430L1340 550M1360 410L1380 545M1300 460L1310 550M1400 460L1420 530M1440 460L1460 530M1480 450L1500 520M1520 450L1540 520M1270 350V390M1210 440L1230 530M1180 380L1310 390M1210 180V290M1240 220V290M1290 180V300M1170 180H1300M1180 210H1290M1180 250H1290M1000 360L1060 500 1110 560 1120 620M1020 220H1070L1100 250M1000 230L1020 330M1065 340L1120 460 1140 490M1110 460L1120 560M1070 550H1110L1150 600M1140 545L1170 540M1140 560L1175 555M1150 575L1180 570M1160 590L1190 580M1060 610L1200 720M1090 590L1210 700M1080 650L1230 760M1070 690L1130 650 1190 610M1080 720H1180M1080 760L1150 710 1200 660M1100 790L1200 730M1100 820L1160 750 1230 780M1110 850L1230 800M1120 870L1220 840 1260 850M1120 880L1250 920M1150 870L1140 910 1200 920M1140 830L1180 900M1190 800L1230 870M1170 680L1220 740M1130 920L1200 990 1240 1050M1190 930L1230 950 1240 970 1210 1000M1200 960L1230 980M1280 900L1270 960 1290 1030M1330 900L1310 960 1360 1080M1270 960L1230 1040 1250 1060M1300 1020L1350 1060 1360 1100M1370 960L1380 1040M1430 1010L1510 1000 1500 1090M1480 980L1540 960M1460 1050L1540 1030M1540 1080L1568 1000M1490 1030L1520 1110M1400 1010L1440 1080M1240 1080L1310 1150M1260 1110L1340 1170M1390 950L1360 900M1540 850L1568 855M1515 700L1500 750 1568 770M1550 760L1540 850M1400 700L1285 712M1540 1230H1500M1240 1210L1320 1190"/>
        <path class="street" d="M330 0L500 230 570 340 640 480 690 590M450 0L480 60M640 50L840 300M400 50L540 260 650 490M410 655H450L560 615 680 545M0 880L100 960 190 1010 240 1050 330 1090 430 1095 610 1058 750 1060 800 1050 900 1055 960 1048 1045 1055M0 810L50 880 150 980 250 1060M245 1120L240 1240 130 1425M690 620L718 720 710 775 727 820M480 860L530 910M910 290L935 380 950 530 1045 1050 1060 1200 1110 1425M740 1065L850 1100 1000 1150 1060 1160 1200 1110M1005 370L1075 620V720L1110 850 1180 1070 1250 1200M1040 970L1070 980 1110 1150 1180 1425M870 60L910 290M650 490L670 545M1200 540L1240 640 1310 780 1360 870 1400 910M1240 1205L1320 1170 1400 1195 1500 1160 1568 1145M1410 940L1500 1150 1510 1220 1568 1310M1280 1340L1440 1275 1480 1425M672 1060L670 1200M680 1060L960 1350M1370 0L1568 170M1240 585L1430 555M250 1200L200 1300 150 1425M330 1090L350 1220 430 1280 720 1400"/>
        <path class="rail" d="M100 0L60 130 0 320M880 0L960 280 1060 680 1110 880 1200 1130 1290 1425M1070 0L1150 300 1240 620 1340 940 1420 1200 1485 1425"/>
      </svg>

      <!-- Tama river and its banks -->
      <path class="river" d="M998 375L1008 443 1039 537 1069 627 1092 690 1115 763 1153 850 1179 890V793L1138 697 1122 647 1088 557 1054 447 1031 375Z"/>
      <path class="river-core" d="M1016 375L1027 453 1058 530 1088 613 1115 707 1146 790 1179 847"/>
      <path class="river-border" d="M1014 383L1027 453 1058 530 1088 613 1115 707 1146 790 1179 847"/>
      <path class="bank" d="M1033 375L1056 447 1090 557 1124 647 1140 697 1181 793M1067 627L1090 690 1113 763 1151 850 1177 890"/>

      <!-- canals -->
      <path class="bank wide" d="M719 1123L723 1143 710 1173 702 1217 700 1257 687 1315"/>
      <path class="canal" d="M0 717L42 725 88 720 184 763 207 783 237 820 283 850 295 860 325 907 352 937 371 947 440 952 471 963 536 1013 600 1065 672 1090 719 1123 723 1143 710 1173 702 1217 700 1257 687 1315"/>
      <path class="brook" d="M681 840L695 870 706 957 714 1007 719 1047 720 1123"/>
      <path class="rail" d="M0 456L50 459 132 466 280 478 480 476 540 482M365 385L430 432 510 475 580 487"/>

      <!-- arterial roads -->
      <g class="road-edge">
        <path d="M130 375L132 480 111 540 77 620 48 680 36 708 48 737 6 768 0 783M0 510L40 600V620L36 650M40 600L77 622 111 647 153 673 191 700 216 733 260 800 285 818 337 838 344 847 398 865 484 890 511 903 536 932 587 957 607 967 721 1037 735 1057 740 1150 742 1207 740 1287 729 1320M740 1287L745 1320M0 651L61 653 111 651M853 375V423L840 467 828 503 786 590 761 637 733 700 695 780 662 850 609 957 603 973 580 1000 551 1027 509 1067M853 425L905 470M651 523L725 583 744 600 761 637 809 710 855 777 897 830 928 860 985 943 1035 1020 1052 1057 1061 1123 1071 1135 1179 1165M740 1145H763L788 1140 800 1120 813 1083 844 1037 874 983 905 945 945 928 958 957 966 960 1000 937 1016 935 1038 942H1088L1123 935 1179 893M0 855L3 875 0 910"/>
      </g>
      <g class="road">
        <path d="M130 375L132 480 111 540 77 620 48 680 36 708 48 737 6 768 0 783M0 510L40 600V620L36 650M40 600L77 622 111 647 153 673 191 700 216 733 260 800 285 818 337 838 344 847 398 865 484 890 511 903 536 932 587 957 607 967 721 1037 735 1057 740 1150 742 1207 740 1287 729 1320M740 1287L745 1320M0 651L61 653 111 651M853 375V423L840 467 828 503 786 590 761 637 733 700 695 780 662 850 609 957 603 973 580 1000 551 1027 509 1067M853 425L905 470M651 523L725 583 744 600 761 637 809 710 855 777 897 830 928 860 985 943 1035 1020 1052 1057 1061 1123 1071 1135 1179 1165M740 1145H763L788 1140 800 1120 813 1083 844 1037 874 983 905 945 945 928 958 957 966 960 1000 937 1016 935 1038 942H1088L1123 935 1179 893M0 855L3 875 0 910"/>
      </g>
      <path class="highway-edge" d="M-5 485L88 452 184 430 283 403 318 392 379 373M563 370L586 423 607 457 622 473 714 470 771 473H874L907 477 950 510 962 543 983 653 1019 813 1036 845 1185 1115M1142 370L1185 424"/>
      <path class="highway" d="M-5 485L88 452 184 430 283 403 318 392 379 373M563 370L586 423 607 457 622 473 714 470 771 473H874L907 477 950 510 962 543 983 653 1019 813 1036 845 1185 1115M1142 370L1185 424"/>

      <path class="express" d="M924 405L893 418 874 438 855 458 842 492 840 520 841 547 851 593 865 640 868 697 866 740 853 793 828 847 809 887 760 957 718 1013 675 1095"/>
      <path class="express-dash" d="M910 411L893 418 874 438 855 458 842 492 840 520 841 547 851 593 865 640 868 697 866 740 853 793 828 847 809 887 760 957 718 1013 675 1095"/>

      <path class="track" d="M748 542L725 600 685 693 653 773 625 850 620 855 624 863 608 890 611 902 596 940 595 963 582 967 574 988H557L534 1017 490 1063 474 1087 466 1110H459L448 1150 455 1155 431 1198V1229"/>

      <!-- prefectural route 45 -->
      <path class="shield-rim" d="M304 383L316 360H350L363 383 350 406H317Z"/>
      <path class="shield" d="M308 383L319 363H348L359 383 347 403H320Z"/>
      <text class="shield-no" x="333" y="391">45</text>

      <text class="place" x="538" y="517">NAKAHARA</text>
      <path id="avenue" fill="none" d="M420 1324L447 1243 466 1180 484 1125 498 1092 520 1058"/>
      <text class="avenue"><textPath href="#avenue">HIMA-KAIDO AVENUE</textPath></text>
      <path id="shinkansen" fill="none" d="M560 1324L603 1245 640 1180 690 1094"/>
      <text class="line-name"><textPath href="#shinkansen">okaido-Shinkansen</textPath></text>
      <text class="line-name ja" transform="translate(922 418) rotate(-26)" lang="ja">横須賀線</text>
    </svg>
    <div class="attribution">
      <span class="brand"><svg viewBox="0 0 30 38" aria-hidden="true"><path d="M21.500 0C21.800 3 20.600 5.300 19.200 7 17.700 8.700 15.800 9.500 14.300 9.300 14 6.500 15.200 4.200 16.600 2.700 18 1.100 20 .2 21.500 0ZM22 9.800C24.500 9.800 27 11 28.700 13.400 25.500 15.200 24.500 18.200 24.700 20.800 25 24 27 26.400 29.800 27.500 28.800 30.400 26.800 33.800 24.800 36 23 37.800 20.900 37.700 19.200 36.900 16.800 35.800 14.400 35.800 12 36.900 9.800 37.900 8 37.800 6.200 36 1 30.500-1.800 21.400 1.300 15.200 3 11.800 6.100 9.900 9.200 9.900 12 9.900 13.800 11.400 15.900 11.400S19.200 9.800 22 9.800Z"/></svg>Maps</span>
      <a href="#legal">Legal</a>
    </div>
  </section>

  <section class="log" aria-label="Recorded points">
    <ul>
      <li><div><p class="time">15:16:05.080</p><p class="dim">(35.5748031, 139.6595244)</p></div><div class="right"><p class="dim">Acc: 6.9</p><p>Speed: 16</p></div></li>
      <li><div><p class="time">15:16:06.001</p><p class="dim">(35.5746735, 139.6594680)</p></div><div class="right"><p class="dim">Acc: 5.6</p><p>Speed: 16</p></div></li>
      <li><div><p class="time">15:16:07.001</p><p class="dim">(35.5745094, 139.6593762)</p></div><div class="right"><p class="dim">Acc: 4.4</p><p>Speed: 17</p></div></li>
      <li><div><p class="time">15:16:08.001</p><p class="dim">(35.5743281, 139.6593237)</p></div><div class="right"><p class="dim">Acc: 7.2</p><p>Speed: 18</p></div></li>
      <li><div><p class="time">15:16:09.001</p><p class="dim">(35.5741748, 139.6592021)</p></div><div class="right"><p class="dim">Acc: 5.0</p><p>Speed: 19</p></div></li>
      <li><div><p class="time">15:16:10.001</p><p class="dim">(35.5740071, 139.6591374)</p></div><div class="right"><p class="dim">Acc: 5.0</p><p>Speed: 19</p></div></li>
      <li><div><p class="time">15:16:11.001</p></div><div class="right"><p class="dim">Acc: 20.2</p></div></li>
    </ul>
  </section>

  <form class="notes">
    <div class="notes-row">
      <input type="text" placeholder="Notes" aria-label="Notes">
      <button type="button" disabled>Save</button>
    </div>
    <div class="home-bar"></div>
  </form>
</main>
</body>
</html>
```
FILE: styles.css
```css
* { box-sizing: border-box; margin: 0; padding: 0; }

body {
  height: 100vh;
  display: flex;
  flex-direction: column;
  overflow: hidden;
  background: #000;
  color: #fff;
  font-family: Inter, "Liberation Sans", sans-serif;
  font-size: 48px;
}

/* status bar */
.status {
  flex: none;
  height: 177px;
  padding: 0 98px 0 124px;
  display: flex;
  align-items: center;
  justify-content: space-between;
}
.status-left, .status-right { display: flex; align-items: center; }
.status-left { gap: 12px; }
.status-left time { font-weight: 600; font-size: 51px; line-height: 60px; }
.status svg { fill: #fff; display: block; }
.arrow { width: 40px; height: 40px; }
.status-right { gap: 22px; }
.signal { width: 58px; height: 38px; }
.signal .off { fill: #333; }
.wifi { width: 50px; height: 38px; }
.battery { width: 82px; height: 40px; }
.battery .shell { fill: none; stroke: #666; stroke-width: 3; }
.battery .cap { fill: #777; }

/* stacked sheets */
.back-card {
  flex: none;
  height: 60px;
  margin: 0 49px -30px;
  border-radius: 30px 30px 0 0;
  background: linear-gradient(90deg, #252525, #1f1f20 50%, #202021);
}
.sheet {
  position: relative;
  flex: 1;
  min-height: 0;
  display: flex;
  flex-direction: column;
  overflow: hidden;
  border-radius: 30px 30px 0 0;
  background: #1c1c1e;
}

.nav {
  flex: none;
  height: 168px;
  padding: 0 49px;
  display: grid;
  grid-template-columns: 1fr auto 1fr;
  align-items: center;
  border-bottom: 1px solid #4a515b;
  background:
    radial-gradient(circle at 54% 8%, #324843, rgba(50, 72, 67, 0) 30%),
    linear-gradient(90deg, #3c404c, #36424e 28%, #35434a 55%, #3a404b 70%, #36424e 88%, #3a3f4b);
}
.nav h1 { grid-column: 2; font-size: 51px; font-weight: 600; line-height: 60px; }
.nav button {
  justify-self: end;
  border: 0;
  background: none;
  color: #6e3544;
  font: inherit;
  line-height: 60px;
}

/* map */
.map-box { position: relative; flex: none; }
.map { display: block; width: 100%; height: auto; background: #33435a; }
.map path { vector-effect: non-scaling-stroke; }
.school { fill: #44434d; }
.hospital { fill: #4d424f; }
.shop { fill: #484570; }
.park { fill: #2d6352; }
.field { fill: #0f5358; }
.wood { fill: #00605e; }
.station { fill: #4562a0; }
.rail-yard { fill: #3c4f6a; }
.relief { fill: #3a4a63; opacity: .5; }
.water-spot { fill: #2036a0; }
.lane, .street, .trail, .brook, .rail, .bank, .canal, .road path, .road-edge path,
.highway, .highway-edge, .express, .express-dash, .track, .river-core, .river-border { fill: none; }
.lane { stroke: #4b5a6d; stroke-width: 2; }
.street { stroke: #566272; stroke-width: 3; }
.trail { stroke: #525b58; stroke-width: 4; }
.brook { stroke: #25398a; stroke-width: 2; }
.rail { stroke: #253044; stroke-width: 2; }
.river { fill: #1f3986; }
.river-core { stroke: #3d347c; stroke-width: 22; }
.river-border { stroke: #6a2b6b; stroke-width: 6; stroke-dasharray: 26 8 6 8; }
.bank { stroke: #4c5a4e; stroke-width: 3; }
.bank.wide { stroke-width: 12; }
.canal { stroke: #1f3986; stroke-width: 5; }
.road-edge path { stroke: #2c3a4e; stroke-width: 10; stroke-linejoin: round; }
.road path { stroke: #67768a; stroke-width: 7; stroke-linejoin: round; }
.highway-edge { stroke: #2c3a4e; stroke-width: 15; stroke-linejoin: round; }
.highway { stroke: #7989a3; stroke-width: 12; stroke-linejoin: round; }
.express { stroke: #1a7dff; stroke-width: 7; stroke-linejoin: round; }
.express-dash { stroke: #22324c; stroke-width: 3; stroke-dasharray: 24 24; }
.track { stroke: #0a84ff; stroke-width: 10; }
.shield-rim { fill: #175fd8; stroke: #175fd8; stroke-width: 4; stroke-linejoin: round; }
.shield { fill: #175fd8; stroke: #d5d9df; stroke-width: 3; stroke-linejoin: round; }
.shield-no { fill: #d5d9df; font: 700 26px Roboto, sans-serif; text-anchor: middle; }
.place, .avenue, .line-name { paint-order: stroke; stroke-linejoin: round; }
.place {
  font: 700 51px "Liberation Sans Narrow", "Roboto Condensed", Roboto, sans-serif;
  fill: #cbd7ea;
  stroke: #2b3a50;
  stroke-width: 4;
}
.avenue { font: 600 25px Inter, sans-serif; fill: #d0dcf0; stroke: #2b3a50; stroke-width: 3; }
.line-name { font: 600 28px Inter, sans-serif; fill: #4c90ff; stroke: #222c40; stroke-width: 7; }
.ja { font-family: "Noto Sans CJK JP", sans-serif; font-weight: 500; }

.attribution {
  position: absolute;
  left: 32px;
  bottom: 19px;
  display: flex;
  align-items: center;
  gap: 30px;
}
.brand {
  display: flex;
  align-items: baseline;
  gap: 5px;
  font-size: 43px;
  font-weight: 500;
  line-height: 60px;
}
.brand svg { width: 30px; height: 38px; fill: #fff; }
.attribution a { color: #8d96a4; font-size: 27px; font-weight: 600; line-height: 56px; text-underline-offset: 4px; }

/* recorded points */
.log { flex: 1; min-height: 0; padding: 105px 49px 0; overflow: hidden; }
.log ul { list-style: none; border-radius: 30px 30px 0 0; background: #2c2c2e; }
.log li {
  position: relative;
  display: flex;
  justify-content: space-between;
  height: 132px;
  margin-left: 47px;
  padding: 22px 48px 16px 0;
  border-bottom: 1px solid #444446;
  font: 34px/46px "Liberation Mono", monospace;
}
.log .time { font-size: 37px; }
.log .dim { color: #8e8e90; }
.right { text-align: right; }

/* notes bar */
.notes {
  flex: none;
  height: 301px;
  padding: 48px 49px 24px;
  display: flex;
  flex-direction: column;
  justify-content: space-between;
  align-items: center;
  background: #2a2a2a;
}
.notes-row { width: 100%; display: flex; align-items: center; gap: 24px; }
.notes input {
  flex: 1;
  min-width: 0;
  height: 102px;
  padding: 0 20px;
  border: 1px solid #333;
  border-radius: 15px;
  background: #000;
  color: #fff;
  font: inherit;
}
.notes input::placeholder { color: #474749; opacity: 1; }
.notes button {
  width: 182px;
  height: 103px;
  border: 0;
  border-radius: 22px;
  background: #000;
  color: #333;
  font: inherit;
}
.home-bar { width: 420px; height: 15px; border-radius: 8px; background: #fff; }
```
